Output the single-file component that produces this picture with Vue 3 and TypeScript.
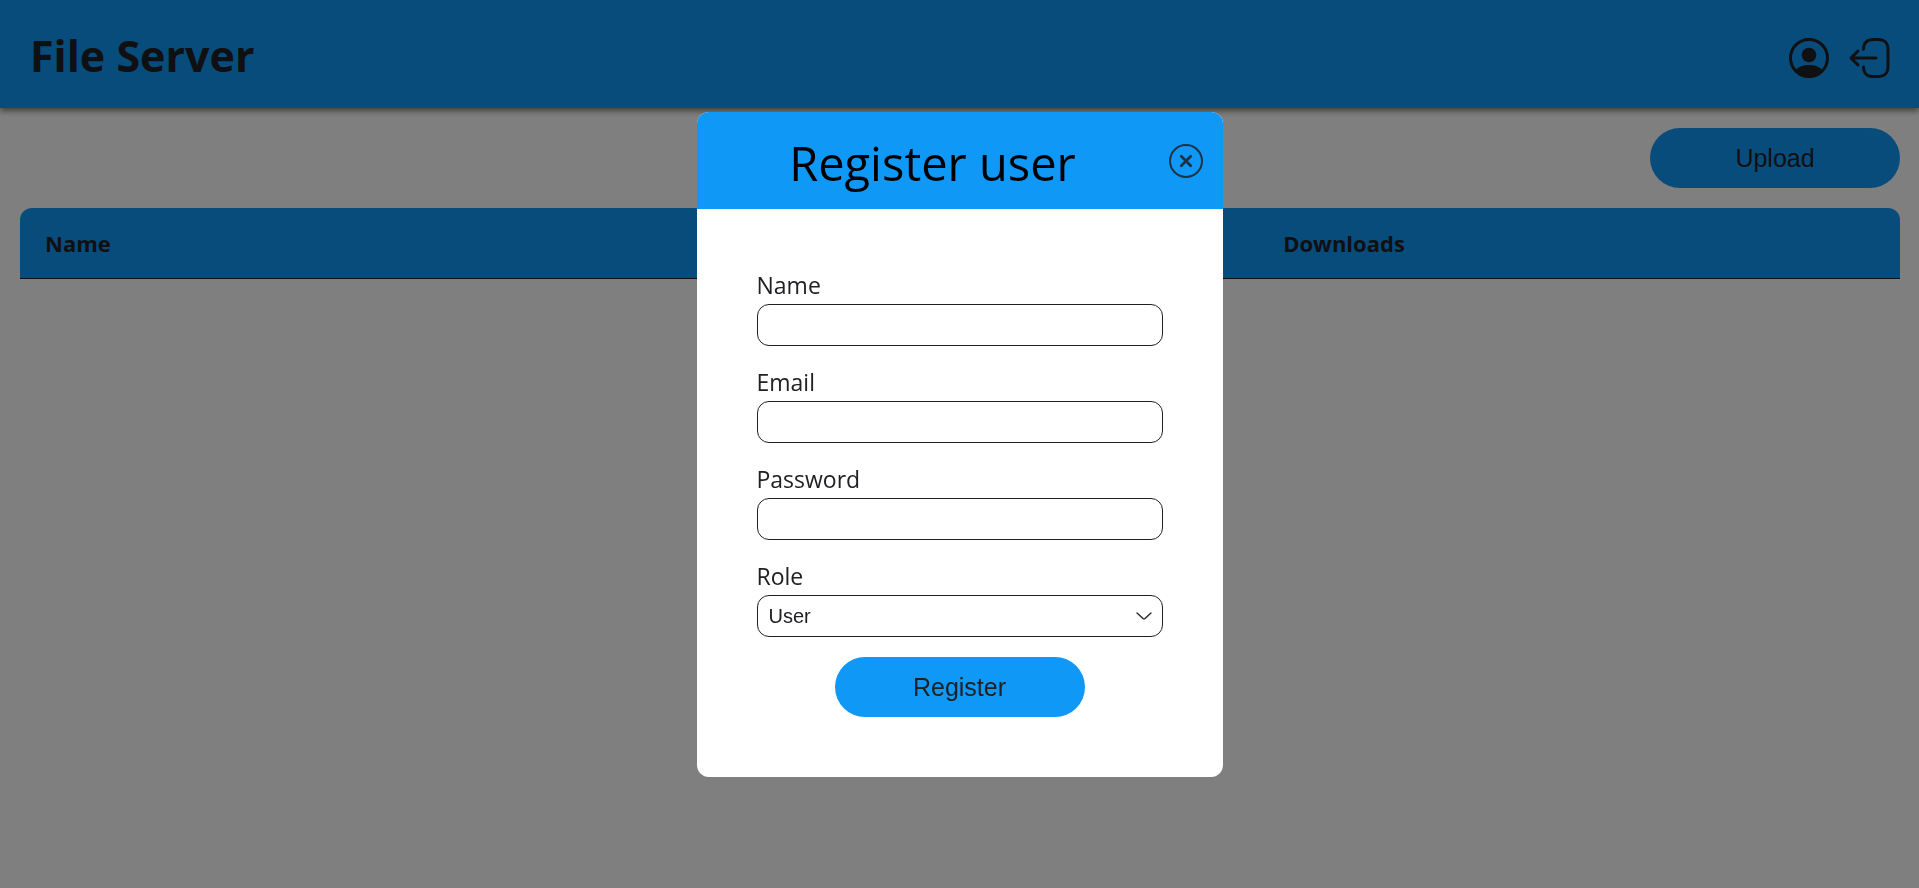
<script setup lang="ts">
import { ref } from 'vue'

interface Field {
  id: string
  label: string
  type: string
}

const fields: Field[] = [
  { id: 'name', label: 'Name', type: 'text' },
  { id: 'email', label: 'Email', type: 'email' },
  { id: 'password', label: 'Password', type: 'password' },
]

const form = ref<Record<string, string>>({ name: '', email: '', password: '' })
const role = ref('User')
const open = ref(true)
</script>

<template>
  <div class="page">
    <header class="topbar">
      <h1 class="brand">File Server</h1>
      <nav class="actions">
        <button class="icon-button" type="button" aria-label="Account">
          <svg class="icon" viewBox="0 0 40 40">
            <circle cx="20" cy="20" r="18.5" fill="none" stroke="currentColor" stroke-width="3" />
            <circle cx="20" cy="17" r="7.3" fill="currentColor" />
            <path d="M6.500 32.500C9.500 28.500 14 27 20 27s10.500 1.500 13.500 5.500C30 36.500 25.500 38.500 20 38.500S10 36.500 6.500 32.500Z" fill="currentColor" />
          </svg>
        </button>
        <button class="icon-button" type="button" aria-label="Log out">
          <svg class="icon" viewBox="0 0 40 40" fill="none" stroke="currentColor" stroke-width="3" stroke-linecap="round" stroke-linejoin="round">
            <path d="M14.500 11.200C14.800 4.500 17.500 1.500 24.500 1.500h4C36 1.500 39 4.500 39 12v16c0 7.500-3 10.500-10.500 10.500h-4c-7 0-9.700-3-10-9.400" />
            <path d="M27 20H2M9 13L2 20l7 7" />
          </svg>
        </button>
      </nav>
    </header>

    <main class="content">
      <button class="pill upload" type="button">Upload</button>
      <table class="files">
        <thead>
          <tr>
            <th class="col-name" scope="col">Name</th>
            <th scope="col">Downloads</th>
          </tr>
        </thead>
      </table>
    </main>

    <div v-if="open" class="backdrop">
      <section class="modal" role="dialog" aria-modal="true" aria-labelledby="modal-title">
        <div class="modal-head">
          <h2 id="modal-title" class="modal-title">Register user</h2>
          <button class="icon-button close" type="button" aria-label="Close" @click="open = false">
            <svg class="close-icon" viewBox="0 0 34 34" fill="none" stroke="currentColor" stroke-linecap="round">
              <circle cx="17" cy="17" r="16" stroke-width="2" />
              <path d="M12.300 12.300l9.400 9.400M21.700 12.300l-9.400 9.400" stroke-width="2.800" />
            </svg>
          </button>
        </div>
        <form class="form" @submit.prevent>
          <div v-for="field in fields" :key="field.id" class="field">
            <label class="label" :for="field.id">{{ field.label }}</label>
            <input :id="field.id" v-model="form[field.id]" class="control" :type="field.type" />
          </div>
          <div class="field">
            <label class="label" for="role">Role</label>
            <div class="select-wrap">
              <select id="role" v-model="role" class="control">
                <option>User</option>
                <option>Admin</option>
              </select>
              <svg class="chevron" viewBox="0 0 16 8" fill="none" stroke="currentColor" stroke-width="1.300" stroke-linecap="round" stroke-linejoin="round">
                <path d="M1 1l6 5.500q1 .8 2 0L15 1" />
              </svg>
            </div>
          </div>
          <button class="pill" type="submit">Register</button>
        </form>
      </section>
    </div>
  </div>
</template>

<style>
body {
  margin: 0;
  background: #fff;
}
</style>

<style scoped>
.page {
  min-height: 100vh;
  color: #202124;
  font-family: 'Segoe UI', 'Open Sans', 'Noto Sans', sans-serif;
}

.topbar {
  display: flex;
  align-items: center;
  justify-content: space-between;
  padding: 26px 30px 22px;
  background: #1098f7;
  box-shadow: 0 3px 6px rgba(0, 0, 0, 0.5);
}

.brand {
  margin: 0;
  font-size: 43px;
  line-height: 60px;
  font-weight: 700;
}

.actions {
  display: flex;
  gap: 20px;
  padding-top: 4px;
}

.icon-button {
  display: block;
  padding: 0;
  border: 0;
  background: none;
  color: #202124;
  cursor: pointer;
}

.icon {
  display: block;
  width: 40px;
  height: 40px;
  overflow: visible;
}

.content {
  display: flex;
  flex-direction: column;
  gap: 20px;
  padding: 20px 19px 20px 20px;
}

.pill {
  width: 250px;
  height: 60px;
  padding: 0;
  border: 0;
  border-radius: 30px;
  background: #1098f7;
  color: #202124;
  font-family: 'Liberation Sans', Arial, sans-serif;
  font-size: 25px;
  cursor: pointer;
}

.upload {
  align-self: flex-end;
}

.files {
  width: 100%;
  border-spacing: 0;
  table-layout: fixed;
}

.files th {
  height: 70px;
  padding: 0 25px;
  border-bottom: 1px solid #202124;
  background: #1098f7;
  font-size: 22px;
  line-height: 32px;
  font-weight: 700;
  text-align: left;
}

.files th:first-child {
  border-top-left-radius: 12px;
}

.files th:last-child {
  border-top-right-radius: 12px;
}

.files .col-name {
  width: 63.2%;
}

.backdrop {
  position: fixed;
  inset: 0;
  display: flex;
  align-items: center;
  justify-content: center;
  padding-top: 1px;
  background: rgba(0, 0, 0, 0.5);
}

.modal {
  width: 526px;
  max-width: 100%;
  overflow: hidden;
  border-radius: 12px;
  background: #fff;
}

.modal-head {
  display: flex;
  align-items: center;
  padding-right: 20px;
  background: #1098f7;
}

.modal-title {
  flex: 1;
  margin: 0;
  padding: 18px 0 13px;
  color: #000;
  font-size: 47px;
  line-height: 66px;
  font-weight: 400;
  text-align: center;
}

.close {
  opacity: 0.85;
}

.close-icon {
  display: block;
  width: 34px;
  height: 34px;
}

.form {
  display: flex;
  flex-direction: column;
  align-items: center;
  gap: 20px;
  padding: 60px;
}

.field {
  display: flex;
  flex-direction: column;
  gap: 3px;
  width: 100%;
}

.label {
  font-size: 23px;
  line-height: 32px;
}

.control {
  display: block;
  width: 100%;
  height: 42px;
  padding: 0 11px;
  box-sizing: border-box;
  border: 1px solid #202124;
  border-radius: 12px;
  outline: 0;
  appearance: none;
  background: #fff;
  color: #202124;
  font-family: 'Liberation Sans', Arial, sans-serif;
  font-size: 20px;
}

.select-wrap {
  position: relative;
}

.chevron {
  position: absolute;
  top: 17px;
  right: 11px;
  width: 16px;
  height: 8px;
  pointer-events: none;
}
</style>
